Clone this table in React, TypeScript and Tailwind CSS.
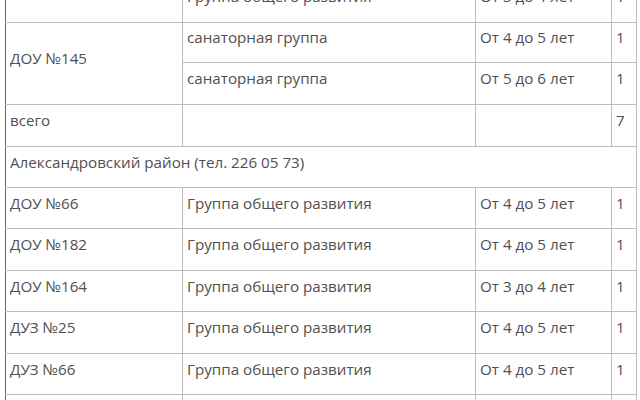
const rows: { name: string; group: string; age: string; count: string; h: string }[] = [
  { name: "ДОУ №66", group: "Группа общего развития", age: "От 4 до 5 лет", count: "1", h: "h-[41px]" },
  { name: "ДОУ №182", group: "Группа общего развития", age: "От 4 до 5 лет", count: "1", h: "h-[42px]" },
  { name: "ДОУ №164", group: "Группа общего развития", age: "От 3 до 4 лет", count: "1", h: "h-[41px]" },
  { name: "ДУЗ №25", group: "Группа общего развития", age: "От 4 до 5 лет", count: "1", h: "h-[42px]" },
  { name: "ДУЗ №66", group: "Группа общего развития", age: "От 4 до 5 лет", count: "1", h: "h-[41px]" },
  { name: "", group: "", age: "", count: "", h: "h-[42px]" },
];

const td = "border border-[#bcbcbc] px-[4px] pt-[1px] pb-[12px] align-middle leading-[22px]";
const first = td + " border-l-[#666]";

export default function App() {
  return (
    <div className="h-[400px] w-[640px] overflow-hidden bg-white font-['Open_Sans',sans-serif] text-[15.2px] text-[#505050]">
      <table className="-mt-[20px] ml-[5px] w-[631px] table-fixed border-collapse border-l border-l-[#666]">
        <colgroup>
          <col className="w-[177px]" />
          <col className="w-[293px]" />
          <col className="w-[136px]" />
          <col className="w-[25px]" />
        </colgroup>
        <tbody>
          <tr className="h-[42px]">
            <td className={first}></td>
            <td className={td}>Группа общего развития</td>
            <td className={td}>От 3 до 4 лет</td>
            <td className={td}>1</td>
          </tr>
          <tr className="h-[40px]">
            <td rowSpan={2} className={first}>ДОУ №145</td>
            <td className={td}>санаторная группа</td>
            <td className={td}>От 4 до 5 лет</td>
            <td className={td}>1</td>
          </tr>
          <tr className="h-[42px]">
            <td className={td}>санаторная группа</td>
            <td className={td}>От 5 до 6 лет</td>
            <td className={td}>1</td>
          </tr>
          <tr className="h-[42px]">
            <td className={first}>всего</td>
            <td className={td}></td>
            <td className={td}></td>
            <td className={td}>7</td>
          </tr>
          <tr className="h-[41px]">
            <td colSpan={4} className={first}>
              Александровский район (тел. 226 05 73)
            </td>
          </tr>
          {rows.map((r, i) => (
            <tr key={i} className={r.h}>
              <td className={first}>{r.name}</td>
              <td className={td}>{r.group}</td>
              <td className={td}>{r.age}</td>
              <td className={td}>{r.count}</td>
            </tr>
          ))}
        </tbody>
      </table>
    </div>
  );
}
